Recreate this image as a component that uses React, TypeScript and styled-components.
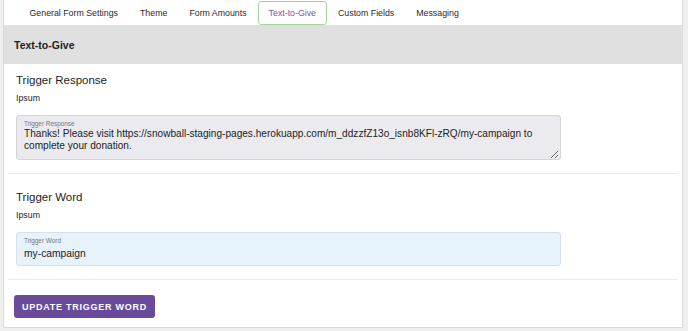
import React, { useState } from "react";
import styled, { createGlobalStyle } from "styled-components";

const GlobalStyle = createGlobalStyle`
  body {
    margin: 0;
    background: #efefef;
    font-family: "Liberation Sans", Arial, sans-serif;
    color: #222;
  }
`;

const Page = styled.div`
  padding: 0 5px 3px 3px;
`;

const Card = styled.div`
  background: #fff;
  border: 1px solid #dadada;
  border-top: none;
  height: 328px;
  box-sizing: border-box;
`;

const TabBar = styled.div`
  display: flex;
  height: 25px;
  padding: 1px 0 0 14.5px;
  box-sizing: border-box;
`;

const Tab = styled.button<{ $active?: boolean }>`
  font-family: inherit;
  font-size: 8.8px;
  padding: 0 10px;
  background: none;
  border: 1px solid ${(p) => (p.$active ? "#a6d6a0" : "transparent")};
  border-radius: 3px;
  color: ${(p) => (p.$active ? "#7b52b2" : "#2a2a2a")};
  cursor: pointer;
`;

const Header = styled.div`
  display: flex;
  align-items: center;
  height: 39px;
  padding-left: 10px;
  background: #e0e0e0;
  font-size: 10.5px;
  font-weight: bold;
  color: #222;
`;

const Body = styled.div`
  padding: 0 4px;
`;

const Section = styled.div<{ $first?: boolean }>`
  padding: ${(p) => (p.$first ? "9px" : "16px")} 8px 13px;
  border-bottom: 1px solid #ececec;
`;

const Heading = styled.h3`
  margin: 0;
  font-size: 11.5px;
  line-height: 14px;
  font-weight: 500;
  color: #1e1e1e;
`;

const Hint = styled.div`
  font-size: 8.8px;
  line-height: 11px;
  margin-top: 6px;
  color: #222;
`;

const Field = styled.label<{ $tone: "gray" | "blue" }>`
  display: flex;
  flex-direction: column;
  width: 545px;
  box-sizing: border-box;
  margin-top: 11px;
  padding: 4px 1px 0 7px;
  border: 1px solid ${(p) => (p.$tone === "blue" ? "#d3dfea" : "#d4d4d8")};
  border-radius: 3px;
  background: ${(p) => (p.$tone === "blue" ? "#e6f2fc" : "#ebebef")};
`;

const FieldLabel = styled.span`
  font-size: 6.4px;
  line-height: 7px;
  color: #777;
`;

const TextArea = styled.textarea`
  font-family: inherit;
  font-size: 10.1px;
  line-height: 12px;
  height: 28px;
  padding: 0 0 3px;
  margin: 1px 0 0;
  border: none;
  background: transparent;
  color: #222;
  resize: vertical;
  outline: none;
`;

const Input = styled.input`
  font-family: inherit;
  font-size: 10.3px;
  line-height: 12px;
  height: 12px;
  padding: 0;
  margin: 4px 0 5px;
  border: none;
  background: transparent;
  color: #222;
  outline: none;
`;

const Footer = styled.div`
  padding: 15px 10px 10px;
`;

const Button = styled.button`
  height: 23px;
  padding: 0 8px;
  border: none;
  border-radius: 3px;
  background: #6a4b9b;
  color: #fff;
  font-family: inherit;
  font-size: 9px;
  font-weight: bold;
  letter-spacing: 0.75px;
  text-transform: uppercase;
  cursor: pointer;
`;

const tabs = ["General Form Settings", "Theme", "Form Amounts", "Text-to-Give", "Custom Fields", "Messaging"];

export default function App() {
  const [active, setActive] = useState("Text-to-Give");
  const [response, setResponse] = useState(
    "Thanks! Please visit https://snowball-staging-pages.herokuapp.com/m_ddzzfZ13o_isnb8KFl-zRQ/my-campaign to complete your donation."
  );
  const [word, setWord] = useState("my-campaign");

  return (
    <>
      <GlobalStyle />
      <Page>
        <Card>
          <TabBar>
            {tabs.map((t) => (
              <Tab key={t} $active={t === active} onClick={() => setActive(t)}>
                {t}
              </Tab>
            ))}
          </TabBar>
          <Header>Text-to-Give</Header>
          <Body>
            <Section $first>
              <Heading>Trigger Response</Heading>
              <Hint>Ipsum</Hint>
              <Field $tone="gray">
                <FieldLabel>Trigger Response</FieldLabel>
                <TextArea rows={2} value={response} onChange={(e) => setResponse(e.target.value)} />
              </Field>
            </Section>
            <Section>
              <Heading>Trigger Word</Heading>
              <Hint>Ipsum</Hint>
              <Field $tone="blue">
                <FieldLabel>Trigger Word</FieldLabel>
                <Input value={word} onChange={(e) => setWord(e.target.value)} />
              </Field>
            </Section>
          </Body>
          <Footer>
            <Button>Update Trigger Word</Button>
          </Footer>
        </Card>
      </Page>
    </>
  );
}
